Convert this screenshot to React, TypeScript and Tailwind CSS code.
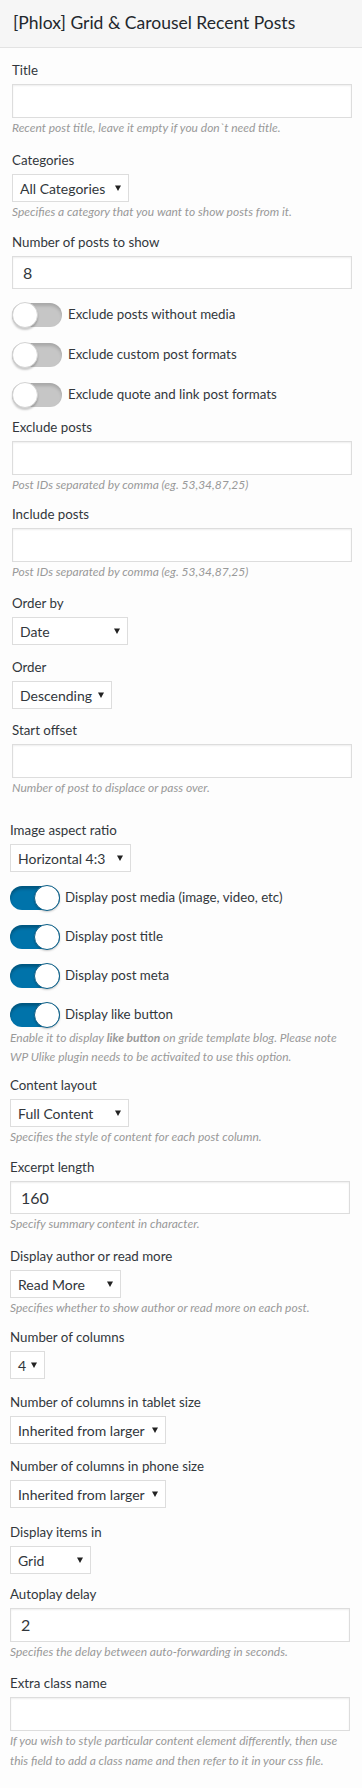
import React from 'react'

function Label({ children }: { children: React.ReactNode }) {
  return <div className="mb-[5px] text-[13.3px] leading-[18px] text-[#32373c]">{children}</div>
}

function Help({ children, className = '' }: { children: React.ReactNode; className?: string }) {
  return <p className={`text-[12px] italic text-[#999] ${className}`}>{children}</p>
}

function TextInput({ value = '', tall = true }: { value?: string; tall?: boolean }) {
  return (
    <div
      className={`${tall ? 'h-[34px]' : 'h-[33px]'} flex w-full items-center border border-[#ddd] bg-white pl-[10px] text-[16px] text-[#32373c] shadow-[inset_0_1px_2px_rgba(0,0,0,0.07)]`}
    >
      {value}
    </div>
  )
}

function Select({ value, className }: { value: string; className: string }) {
  return (
    <div
      className={`${className} flex h-[28px] items-center justify-between border border-[#ddd] bg-white pl-[7px] pr-[7px] text-[14px] text-[#32373c]`}
    >
      <span className="whitespace-nowrap">{value}</span>
      <svg width="6" height="6" viewBox="0 0 6 6" className="ml-[4px] shrink-0">
        <path d="M0 0.5h6L3 6z" fill="#222" />
      </svg>
    </div>
  )
}

function Toggle({ on, label }: { on?: boolean; label: string }) {
  return (
    <div className="flex h-[26px] items-center">
      <div className="relative h-[26px] w-[50px] shrink-0">
        {on ? (
          <>
            <div className="absolute inset-x-0 top-[1px] bottom-[1px] rounded-full bg-[#0073aa] shadow-[inset_0_3px_3px_rgba(0,0,0,0.25)]" />
            <div className="absolute right-0 top-0 h-[26px] w-[26px] rounded-full border-[1.5px] border-[#0b5f88] bg-white shadow-[0_1px_2px_rgba(0,0,0,0.2)]" />
          </>
        ) : (
          <>
            <div className="absolute inset-x-0 top-[1px] bottom-[1px] rounded-full bg-[#c6c6c6] shadow-[inset_0_3px_3px_rgba(0,0,0,0.15)]" />
            <div className="absolute left-0 top-0 h-[26px] w-[26px] rounded-full border border-[#d4d4d4] bg-white shadow-[0_2px_2px_rgba(0,0,0,0.2)]" />
          </>
        )}
      </div>
      <span className={`${on ? 'ml-[5px]' : 'ml-[6px]'} whitespace-nowrap text-[13.3px] text-[#32373c]`}>{label}</span>
    </div>
  )
}

export default function App() {
  return (
    <div className="min-h-screen bg-[#fdfdfd] font-['Lato','Noto_Sans',sans-serif]">
      <div className="flex h-[48px] items-center border-b border-[#e3e3e3] bg-[#f6f6f6] px-[13px]">
        <h2 className="text-[17.5px] text-[#23282d]">[Phlox] Grid &amp; Carousel Recent Posts</h2>
      </div>

      <div className="pl-[12px] pr-[10px]">
        <div className="mt-[13px]">
          <Label>Title</Label>
          <TextInput />
          <Help className="mt-[1px] leading-[18px]">Recent post title, leave it empty if you don`t need title.</Help>
        </div>

        <div className="mt-[14px]">
          <Label>Categories</Label>
          <Select value="All Categories" className="w-[117px]" />
          <Help className="mt-[1px] leading-[18px]">Specifies a category that you want to show posts from it.</Help>
        </div>

        <div className="mt-[12px]">
          <Label>Number of posts to show</Label>
          <TextInput value="8" tall={false} />
        </div>

        <div className="mt-[13px] flex flex-col gap-[14px]">
          <Toggle label="Exclude posts without media" />
          <Toggle label="Exclude custom post formats" />
          <Toggle label="Exclude quote and link post formats" />
        </div>

        <div className="mt-[10px]">
          <Label>Exclude posts</Label>
          <TextInput />
          <Help className="mt-[1px] leading-[18px]">Post IDs separated by comma (eg. 53,34,87,25)</Help>
        </div>

        <div className="mt-[11px]">
          <Label>Include posts</Label>
          <TextInput />
          <Help className="mt-[1px] leading-[18px]">Post IDs separated by comma (eg. 53,34,87,25)</Help>
        </div>

        <div className="mt-[13px]">
          <Label>Order by</Label>
          <Select value="Date" className="w-[116px]" />
        </div>

        <div className="mt-[13px]">
          <Label>Order</Label>
          <Select value="Descending" className="w-[100px]" />
        </div>

        <div className="mt-[12px]">
          <Label>Start offset</Label>
          <TextInput />
          <Help className="mt-[1px] leading-[18px]">Number of post to displace or pass over.</Help>
        </div>
      </div>

      <div className="pb-[17px] pl-[10px] pr-[12px]">
        <div className="mt-[24px]">
          <Label>Image aspect ratio</Label>
          <Select value="Horizontal 4:3" className="w-[121px]" />
        </div>

        <div className="mt-[13px] flex flex-col gap-[13px]">
          <Toggle on label="Display post media (image, video, etc)" />
          <Toggle on label="Display post title" />
          <Toggle on label="Display post meta" />
          <Toggle on label="Display like button" />
        </div>
        <Help className="leading-[19px]">
          Enable it to display <b className="font-bold">like button</b> on gride template blog. Please note
          <br />
          WP Ulike plugin needs to be activaited to use this option.
        </Help>

        <div className="mt-[10px]">
          <Label>Content layout</Label>
          <Select value="Full Content" className="w-[119px]" />
          <Help className="mt-[1px] leading-[18px]">Specifies the style of content for each post column.</Help>
        </div>

        <div className="mt-[12px]">
          <Label>Excerpt length</Label>
          <TextInput value="160" tall={false} />
          <Help className="mt-[1px] leading-[18px]">Specify summary content in character.</Help>
        </div>

        <div className="mt-[14px]">
          <Label>Display author or read more</Label>
          <Select value="Read More" className="w-[111px]" />
          <Help className="mt-[1px] leading-[18px]">Specifies whether to show author or read more on each post.</Help>
        </div>

        <div className="mt-[11px]">
          <Label>Number of columns</Label>
          <Select value="4" className="w-[35px]" />
        </div>

        <div className="mt-[14px]">
          <Label>Number of columns in tablet size</Label>
          <Select value="Inherited from larger" className="w-[156px]" />
        </div>

        <div className="mt-[13px]">
          <Label>Number of columns in phone size</Label>
          <Select value="Inherited from larger" className="w-[156px]" />
        </div>

        <div className="mt-[15px]">
          <Label>Display items in</Label>
          <Select value="Grid" className="w-[81px]" />
        </div>

        <div className="mt-[11px]">
          <Label>Autoplay delay</Label>
          <TextInput value="2" />
          <Help className="mt-[1px] leading-[18px]">Specifies the delay between auto-forwarding in seconds.</Help>
        </div>

        <div className="mt-[13px]">
          <Label>Extra class name</Label>
          <TextInput />
          <Help className="leading-[20px]">
            If you wish to style particular content element differently, then use
            <br />
            this field to add a class name and then refer to it in your css file.
          </Help>
        </div>
      </div>
    </div>
  )
}
